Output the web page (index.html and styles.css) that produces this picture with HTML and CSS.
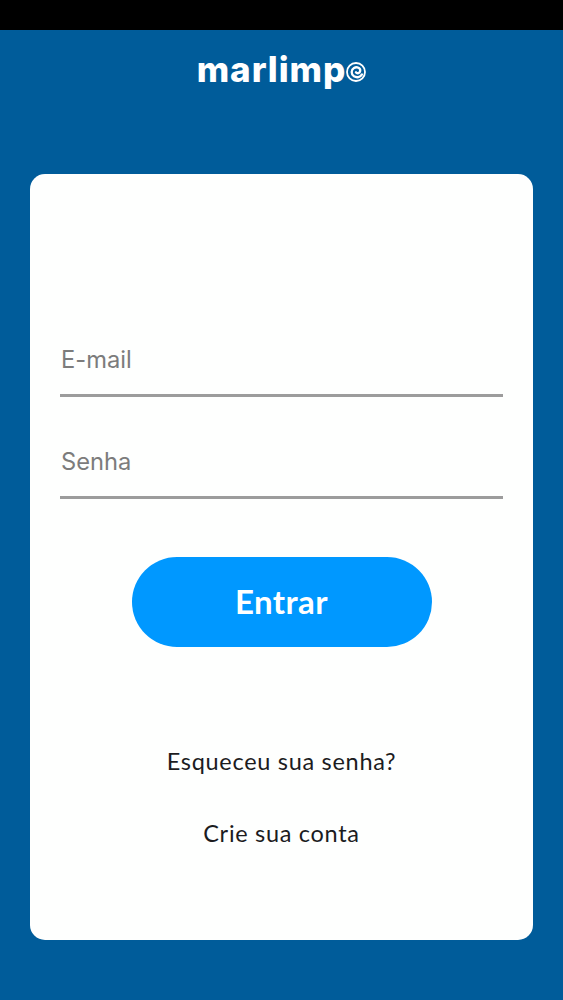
FILE: index.html
```html
<!DOCTYPE html>
<html lang="pt-BR">
<head>
<meta charset="utf-8">
<title>marlimpo</title>
<link rel="stylesheet" href="styles.css">
</head>
<body>
<div class="status-bar"></div>
<header class="header">
  <div class="logo">
    <span class="logo-text">marlimp</span>
    <svg class="logo-mark" viewBox="0 0 20 20" aria-hidden="true">
      <circle class="ring" cx="10" cy="10" r="9"/>
      <path class="wave" d="M16 12.4C14.2 15.4 10.8 16 8 14.3C4.8 12.2 5 7.6 8 5.9C11 4.3 14.7 6 14.2 9C13.8 11.3 11.2 12 9.9 10.3"/>
    </svg>
  </div>
</header>
<main class="card">
  <form class="form">
    <input class="field" type="email" placeholder="E-mail" aria-label="E-mail">
    <input class="field" type="password" placeholder="Senha" aria-label="Senha">
    <button class="submit" type="button">Entrar</button>
  </form>
  <nav class="links">
    <a class="link link-forgot">Esqueceu sua senha?</a>
    <a class="link link-create">Crie sua conta</a>
  </nav>
</main>
</body>
</html>
```
FILE: styles.css
```css
* { box-sizing: border-box; }
body {
  margin: 0;
  height: 1000px;
  display: flex;
  flex-direction: column;
  overflow: hidden;
  background: #005c9a;
  font-family: Lato, sans-serif;
}
.status-bar { height: 30px; background: #000; }
.header { height: 144px; padding-top: 20px; }
.logo {
  display: flex;
  justify-content: center;
  align-items: flex-start;
  height: 44px;
  color: #fff;
}
.logo-text {
  font: 800 35px/38px Inter, sans-serif;
  letter-spacing: 0.95px;
}
.logo-mark {
  width: 20px;
  height: 20px;
  margin-top: 12px;
  fill: none;
  stroke: #fff;
  stroke-linecap: round;
}
.ring { stroke-width: 1.8; }
.wave { stroke-width: 2.3; }
.card {
  height: 766px;
  margin: 0 30px;
  padding: 146px 30px 0;
  border-radius: 15px;
  background: #fefffe;
}
.form { display: flex; flex-direction: column; }
.field {
  height: 77px;
  margin-bottom: 25px;
  padding: 4px 0 0 1px;
  border: 0;
  border-bottom: 3px solid #9c9c9c;
  border-radius: 0;
  background: none;
  font: 400 23.7px Inter, sans-serif;
  outline: 0;
}
.field::placeholder { color: #7c7c7c; opacity: 1; }
.submit {
  align-self: center;
  width: 300px;
  height: 90px;
  margin-top: 33px;
  padding: 0 0 3px;
  border: 0;
  border-radius: 45px;
  background: #0098ff;
  color: #fff;
  font: 700 33px Lato, sans-serif;
  letter-spacing: 0.4px;
}
.links {
  display: flex;
  flex-direction: column;
  align-items: center;
  gap: 36px;
  margin-top: 96px;
}
.link {
  color: #1c1c1e;
  font-size: 23.5px;
  letter-spacing: 0.7px;
  line-height: 36px;
  white-space: nowrap;
}
```
